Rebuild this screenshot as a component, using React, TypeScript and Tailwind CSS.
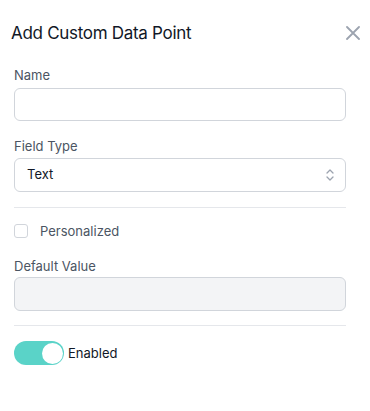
import React from "react";

export default function App() {
  return (
    <div
      className="w-[370px] h-[411px] bg-white text-[#1f2937]"
      style={{ fontFamily: "Inter, 'Open Sans', sans-serif" }}
    >
      <div className="flex items-center justify-between pl-[11px] pr-[10px] pt-[22px] h-[44px]">
        <h2 className="text-[17px] leading-[22px] font-normal text-[#111827] tracking-[-0.3px]">
          Add Custom Data Point
        </h2>
        <svg width="14" height="14" viewBox="0 0 14 14">
          <path d="M1 1 L13 13 M13 1 L1 13" stroke="#9ca3af" strokeWidth="1.8" strokeLinecap="round" />
        </svg>
      </div>

      <div className="pl-[14px] pr-[24px] pt-[23px] flex flex-col">
        <label className="text-[13px] leading-[16px] text-[#4b5563]">Name</label>
        <div className="mt-[5px] h-[33px] rounded-[6px] border border-[#d1d5db] bg-white" />

        <label className="mt-[17px] text-[13px] leading-[16px] text-[#4b5563]">Field Type</label>
        <div className="mt-[4px] h-[34px] rounded-[6px] border border-[#d1d5db] bg-white flex items-center justify-between pl-[12px] pr-[10px]">
          <span className="text-[13px] text-[#111827]">Text</span>
          <svg width="10" height="16" viewBox="0 0 10 16">
            <path d="M2 6 L5 3 L8 6 M2 10 L5 13 L8 10" stroke="#9ca3af" strokeWidth="1.3" fill="none" strokeLinecap="round" strokeLinejoin="round" />
          </svg>
        </div>

        <div className="mt-[15px] h-px bg-[#e5e7eb]" />

        <div className="mt-[15px] flex items-center h-[16px]">
          <div className="w-[14px] h-[14px] rounded-[3px] border border-[#d1d5db] bg-white" />
          <span className="ml-[12px] text-[13px] leading-[16px] text-[#4b5563]">Personalized</span>
        </div>

        <label className="mt-[19px] text-[13px] leading-[16px] text-[#4b5563]">Default Value</label>
        <div className="mt-[3px] h-[34px] rounded-[6px] border border-[#d1d5db] bg-[#f3f4f6]" />

        <div className="mt-[14px] h-px bg-[#e5e7eb]" />

        <div className="mt-[15px] flex items-center">
          <div className="w-[50px] h-[24px] rounded-full bg-[#5ad3c8] flex items-center justify-end p-[1.5px]">
            <div className="w-[21px] h-[21px] rounded-full bg-white" />
          </div>
          <span className="ml-[4px] text-[13px] leading-[16px] text-[#111827]">Enabled</span>
        </div>
      </div>
    </div>
  );
}
